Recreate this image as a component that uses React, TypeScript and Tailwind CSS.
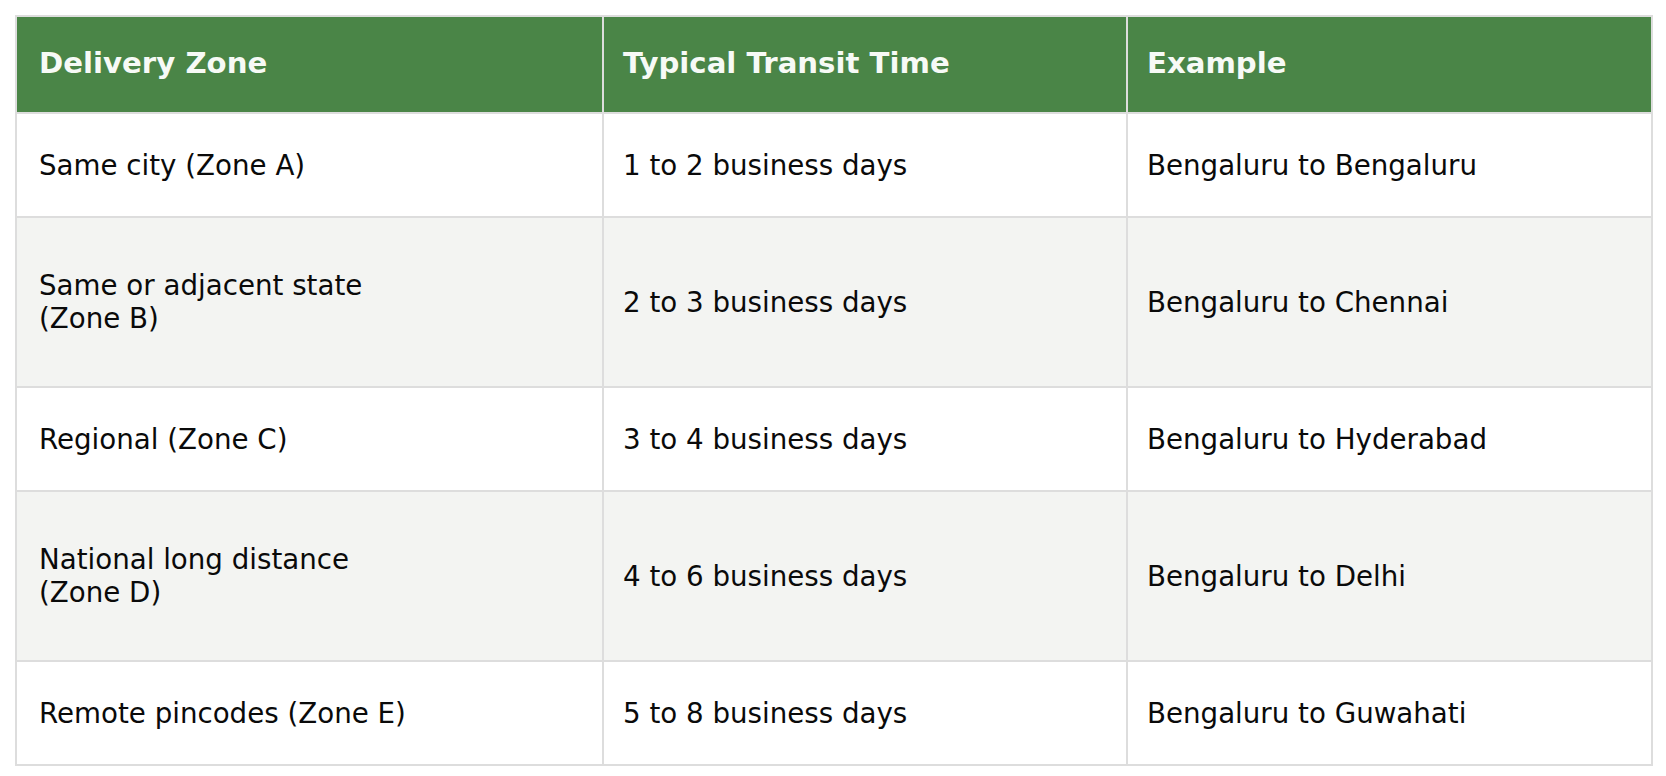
const rows = [
  { zone: ["Same city (Zone A)"], time: "1 to 2 business days", example: "Bengaluru to Bengaluru", tall: false },
  { zone: ["Same or adjacent state", "(Zone B)"], time: "2 to 3 business days", example: "Bengaluru to Chennai", tall: true },
  { zone: ["Regional (Zone C)"], time: "3 to 4 business days", example: "Bengaluru to Hyderabad", tall: false },
  { zone: ["National long distance", "(Zone D)"], time: "4 to 6 business days", example: "Bengaluru to Delhi", tall: true },
  { zone: ["Remote pincodes (Zone E)"], time: "5 to 8 business days", example: "Bengaluru to Guwahati", tall: false },
];

export default function App() {
  return (
    <div className="min-h-[776px] bg-white pl-[15px] pt-[15px] font-['DejaVu_Sans',sans-serif]">
      <table className="w-[1636px] table-fixed border-collapse border-2 border-[#dddddd] text-[27.7px] leading-[33px]">
        <colgroup>
          <col className="w-[587px]" />
          <col className="w-[524px]" />
          <col className="w-[525px]" />
        </colgroup>
        <thead>
          <tr className="h-[97px] bg-[#4a8547] text-left text-[29.2px] font-bold text-[#f7faf6]">
            <th className="border-2 border-[#dddddd] pb-[2px] pl-[22px]">Delivery Zone</th>
            <th className="border-2 border-[#dddddd] pb-[2px] pl-[19px]">Typical Transit Time</th>
            <th className="border-2 border-[#dddddd] pb-[2px] pl-[19px]">Example</th>
          </tr>
        </thead>
        <tbody className="text-[#0a0a0a]">
          {rows.map((row, i) => (
            <tr key={row.time} className={`${row.tall ? "h-[170px]" : "h-[104px]"} ${i % 2 === 1 ? "bg-[#f3f4f2]" : "bg-white"}`}>
              <td className="border-2 border-[#dddddd] pl-[22px]">
                {row.zone.map((line) => (
                  <div key={line}>{line}</div>
                ))}
              </td>
              <td className="border-2 border-[#dddddd] pl-[19px]">{row.time}</td>
              <td className="border-2 border-[#dddddd] pl-[19px]">{row.example}</td>
            </tr>
          ))}
        </tbody>
      </table>
    </div>
  );
}
